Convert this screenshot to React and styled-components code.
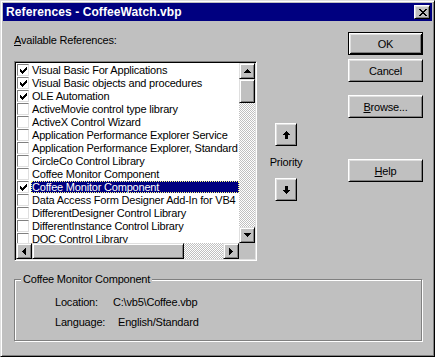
import React from "react";
import styled, { createGlobalStyle } from "styled-components";

const GlobalStyle = createGlobalStyle`
  body {
    margin: 0;
    background: #c0c0c0;
  }
`;

const refs = [
  { name: "Visual Basic For Applications", checked: true },
  { name: "Visual Basic objects and procedures", checked: true },
  { name: "OLE Automation", checked: true },
  { name: "ActiveMovie control type library" },
  { name: "ActiveX Control Wizard" },
  { name: "Application Performance Explorer Service" },
  { name: "Application Performance Explorer, Standard" },
  { name: "CircleCo Control Library" },
  { name: "Coffee Monitor Component" },
  { name: "Coffee Monitor Component", checked: true, selected: true },
  { name: "Data Access Form Designer Add-In for VB4" },
  { name: "DifferentDesigner Control Library" },
  { name: "DifferentInstance Control Library" },
  { name: "DOC Control Library" },
];

// small pixel drawings (arrows, check, close X)
const Pixels = ({ rows, color = "#000" }) => {
  const w = rows[0].length;
  const h = rows.length;
  const rects = [];
  rows.forEach((row, y) => {
    [...row].forEach((c, x) => {
      if (c === "x") rects.push(<rect key={`${x}-${y}`} x={x} y={y} width="1" height="1" />);
    });
  });
  return (
    <svg width={w} height={h} viewBox={`0 0 ${w} ${h}`} fill={color} shapeRendering="crispEdges">
      {rects}
    </svg>
  );
};

const UP = ["...x...", "..xxx..", ".xxxxx.", "xxxxxxx"];
const DOWN = [...UP].reverse();
const LEFT = ["...x", "..xx", ".xxx", "xxxx", ".xxx", "..xx", "...x"];
const RIGHT = LEFT.map((r) => [...r].reverse().join(""));
const BIG_UP = ["...x...", "..xxx..", ".xxxxx.", "xxxxxxx", "..xxx..", "..xxx..", "..xxx..", "..xxx.."];
const BIG_DOWN = [...BIG_UP].reverse();
const CLOSE = ["xx....xx", ".xx..xx.", "..xxxx..", "...xx...", "..xxxx..", ".xx..xx.", "xx....xx"];
const CHECK = ["......x", ".....xx", "x...xxx", "xx.xxx.", "xxxxx..", ".xxx...", "..x...."];

const Window = styled.div`
  width: 435px;
  height: 357px;
  box-sizing: border-box;
  background: #c0c0c0;
  border: 1px solid;
  border-color: #dfdfdf #000 #000 #dfdfdf;
  box-shadow: inset 1px 1px #fff, inset -1px -1px #808080;
  padding: 2px;
  display: flex;
  flex-direction: column;
  font-family: "Liberation Sans", Arial, sans-serif;
  font-size: 11px;
  letter-spacing: -0.2px;
  color: #000;
`;

const TitleBar = styled.div`
  height: 18px;
  flex: none;
  background: #000080;
  display: flex;
  align-items: center;
  justify-content: space-between;
  padding: 0 2px 0 3px;
`;

const Title = styled.span`
  color: #fff;
  font-weight: bold;
  font-size: 12px;
  letter-spacing: 0.1px;
`;

const bevel = `
  border: 1px solid;
  border-color: #fff #000 #000 #fff;
  box-shadow: inset 1px 1px #dfdfdf, inset -1px -1px #808080;
`;

const CloseButton = styled.div`
  width: 16px;
  height: 14px;
  box-sizing: border-box;
  background: #c0c0c0;
  ${bevel}
  display: flex;
  align-items: center;
  justify-content: center;
  padding-left: 1px;
`;

const Client = styled.div`
  flex: 1;
  display: flex;
  flex-direction: column;
  padding: 11px 9px 0 11px;
`;

const TopRow = styled.div`
  display: flex;
`;

const LeftCol = styled.div`
  width: 243px;
  display: flex;
  flex-direction: column;
`;

const Label = styled.div`
  line-height: 13px;
  margin-top: 2px;
`;

const ListBox = styled.div`
  margin-top: 14px;
  width: 243px;
  height: 200px;
  box-sizing: border-box;
  border: 1px solid;
  border-color: #808080 #fff #fff #808080;
  box-shadow: inset 1px 1px #000, inset -1px -1px #dfdfdf;
  padding: 1px;
  background: #fff;
  display: grid;
  grid-template-columns: 223px 16px;
  grid-template-rows: 180px 16px;
`;

const Items = styled.div`
  overflow: hidden;
`;

const Row = styled.div`
  height: 13px;
  display: flex;
  align-items: flex-start;
  white-space: nowrap;
`;

const CheckBox = styled.div`
  width: 12px;
  height: 12px;
  margin: 1px 0 0 1px;
  box-sizing: border-box;
  flex: none;
  border: 1px solid;
  border-color: #808080 #dfdfdf #dfdfdf #808080;
  background: #fff;
  display: flex;
  align-items: center;
  justify-content: center;
`;

const ItemText = styled.span`
  flex: 1;
  margin-left: 2px;
  padding-left: 1px;
  height: 12px;
  margin-top: 1px;
  line-height: 12px;
  box-sizing: border-box;
  overflow: hidden;
  background: ${(p) => (p.$selected ? "#000080" : "transparent")};
  color: ${(p) => (p.$selected ? "#fff" : "#000")};
  outline: ${(p) => (p.$selected ? "1px dotted #ffff7f" : "none")};
  outline-offset: -1px;
`;

const Track = styled.div`
  display: flex;
  flex-direction: ${(p) => (p.$horizontal ? "row" : "column")};
  background-color: #c0c0c0;
  background-image: repeating-conic-gradient(#fff 0 25%, #c0c0c0 0 50%);
  background-size: 2px 2px;
`;

const ScrollButton = styled.div`
  flex: none;
  width: ${(p) => (p.$w ? `${p.$w}px` : "16px")};
  height: ${(p) => (p.$h ? `${p.$h}px` : "16px")};
  box-sizing: border-box;
  background: #c0c0c0;
  border: 1px solid;
  border-color: #dfdfdf #000 #000 #dfdfdf;
  box-shadow: inset 1px 1px #fff, inset -1px -1px #808080;
  display: flex;
  align-items: center;
  justify-content: center;
`;

const Spacer = styled.div`
  flex: 1;
`;

const Corner = styled.div`
  background: #c0c0c0;
`;

const PriorityCol = styled.div`
  margin-left: 12px;
  width: 34px;
  display: flex;
  flex-direction: column;
  align-items: center;
  padding-top: 91px;
`;

const ArrowButton = styled.div`
  width: 22px;
  height: 23px;
  box-sizing: border-box;
  background: #c0c0c0;
  ${bevel}
  display: flex;
  align-items: center;
  justify-content: center;
`;

const PriorityLabel = styled.div`
  line-height: 13px;
  margin: 10px 0 9px;
`;

const ButtonCol = styled.div`
  margin-left: auto;
  width: 75px;
  display: flex;
  flex-direction: column;
`;

const Button = styled.div`
  height: 23px;
  margin-top: ${(p) => p.$gap || 0}px;
  box-sizing: border-box;
  background: #c0c0c0;
  display: flex;
  align-items: center;
  justify-content: center;
  ${(p) =>
    p.$default
      ? `
    border: 1px solid #000;
    box-shadow: inset 1px 1px #fff, inset -1px -1px #000, inset 2px 2px #dfdfdf, inset -2px -2px #808080;
  `
      : bevel}
`;

const GroupBox = styled.div`
  position: relative;
  margin-top: 18px;
  margin-right: 1px;
  height: 62px;
  box-sizing: border-box;
  border: 1px solid #808080;
  box-shadow: inset 1px 1px #fff, 1px 1px #fff;
  padding: 16px 0 0 40px;
  display: grid;
  grid-template-columns: 58px 1fr;
  grid-auto-rows: 13px;
  row-gap: 7px;
  line-height: 13px;
`;

const Legend = styled.span`
  position: absolute;
  top: -7px;
  left: 6px;
  padding: 0 2px;
  line-height: 13px;
  background: #c0c0c0;
`;

const Value = styled.span`
  padding-left: ${(p) => p.$indent || 0}px;
`;

export default function App() {
  return (
    <>
      <GlobalStyle />
      <Window>
        <TitleBar>
          <Title>References - CoffeeWatch.vbp</Title>
          <CloseButton>
            <Pixels rows={CLOSE} />
          </CloseButton>
        </TitleBar>
        <Client>
          <TopRow>
            <LeftCol>
              <Label>
                <u>A</u>vailable References:
              </Label>
              <ListBox>
                <Items>
                  {refs.map((r, i) => (
                    <Row key={i}>
                      <CheckBox>{r.checked && <Pixels rows={CHECK} />}</CheckBox>
                      <ItemText $selected={r.selected}>{r.name}</ItemText>
                    </Row>
                  ))}
                </Items>
                <Track>
                  <ScrollButton>
                    <Pixels rows={UP} />
                  </ScrollButton>
                  <ScrollButton $h={24} />
                  <Spacer />
                  <ScrollButton>
                    <Pixels rows={DOWN} />
                  </ScrollButton>
                </Track>
                <Track $horizontal>
                  <ScrollButton>
                    <Pixels rows={LEFT} />
                  </ScrollButton>
                  <ScrollButton $w={152} />
                  <Spacer />
                  <ScrollButton>
                    <Pixels rows={RIGHT} />
                  </ScrollButton>
                </Track>
                <Corner />
              </ListBox>
            </LeftCol>
            <PriorityCol>
              <ArrowButton>
                <Pixels rows={BIG_UP} />
              </ArrowButton>
              <PriorityLabel>Priority</PriorityLabel>
              <ArrowButton>
                <Pixels rows={BIG_DOWN} />
              </ArrowButton>
            </PriorityCol>
            <ButtonCol>
              <Button $default>OK</Button>
              <Button $gap={4}>Cancel</Button>
              <Button $gap={13}>
                <span>
                  <u>B</u>rowse...
                </span>
              </Button>
              <Button $gap={41}>
                <span>
                  <u>H</u>elp
                </span>
              </Button>
            </ButtonCol>
          </TopRow>
          <GroupBox>
            <Legend>Coffee Monitor Component</Legend>
            <span>Location:</span>
            <Value>C:\vb5\Coffee.vbp</Value>
            <span>Language:</span>
            <Value $indent={5}>English/Standard</Value>
          </GroupBox>
        </Client>
      </Window>
    </>
  );
}
